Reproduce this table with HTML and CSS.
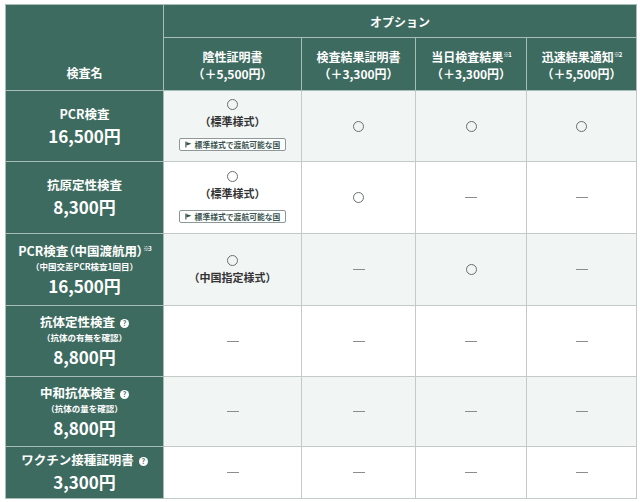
FILE: index.html
```html
<!DOCTYPE html>
<html lang="ja">
<head>
<meta charset="utf-8">
<title>検査料金</title>
<link rel="stylesheet" href="styles.css">
</head>
<body>
<div class="wrap">
<table class="price">
<colgroup>
<col class="c-name"><col class="c-neg"><col class="c-res"><col class="c-day"><col class="c-fast">
</colgroup>
<thead>
<tr class="h1">
<th class="name-h" rowspan="2">検査名</th>
<th colspan="4">オプション</th>
</tr>
<tr class="h2">
<th>陰性証明書<br>（＋5,500円）</th>
<th>検査結果証明書<br>（＋3,300円）</th>
<th>当日検査結果<sup>※1</sup><br>（＋3,300円）</th>
<th>迅速結果通知<sup>※2</sup><br>（＋5,500円）</th>
</tr>
</thead>
<tbody>
<tr class="r-a alt">
<th class="name"><span class="t">PCR検査</span><span class="p">16,500円</span></th>
<td><span class="ok"></span><span class="note">（標準様式）</span><span class="badge"><svg class="flag" viewBox="0 0 8 8" width="7" height="7"><path d="M1 0.5v7" stroke="#2f4f47" stroke-width="1.2"/><path d="M1.6 1l5.8 2-5.8 2z" fill="#2f4f47"/></svg>標準様式で渡航可能な国</span></td>
<td><span class="ok"></span></td>
<td><span class="ok"></span></td>
<td><span class="ok"></span></td>
</tr>
<tr class="r-b">
<th class="name"><span class="t">抗原定性検査</span><span class="p">8,300円</span></th>
<td><span class="ok"></span><span class="note">（標準様式）</span><span class="badge"><svg class="flag" viewBox="0 0 8 8" width="7" height="7"><path d="M1 0.5v7" stroke="#2f4f47" stroke-width="1.2"/><path d="M1.6 1l5.8 2-5.8 2z" fill="#2f4f47"/></svg>標準様式で渡航可能な国</span></td>
<td><span class="ok"></span></td>
<td><span class="no"></span></td>
<td><span class="no"></span></td>
</tr>
<tr class="r-c alt">
<th class="name"><span class="t tight">PCR検査（中国渡航用）<sup>※3</sup></span><span class="s">（中国交差PCR検査1回目）</span><span class="p">16,500円</span></th>
<td><span class="ok"></span><span class="note">（中国指定様式）</span></td>
<td><span class="no"></span></td>
<td><span class="ok"></span></td>
<td><span class="no"></span></td>
</tr>
<tr class="r-d">
<th class="name"><span class="t">抗体定性検査<span class="q">?</span></span><span class="s">（抗体の有無を確認）</span><span class="p">8,800円</span></th>
<td><span class="no"></span></td>
<td><span class="no"></span></td>
<td><span class="no"></span></td>
<td><span class="no"></span></td>
</tr>
<tr class="r-e alt">
<th class="name"><span class="t">中和抗体検査<span class="q">?</span></span><span class="s">（抗体の量を確認）</span><span class="p">8,800円</span></th>
<td><span class="no"></span></td>
<td><span class="no"></span></td>
<td><span class="no"></span></td>
<td><span class="no"></span></td>
</tr>
<tr class="r-f">
<th class="name"><span class="t">ワクチン接種証明書<span class="q">?</span></span><span class="p">3,300円</span></th>
<td><span class="no"></span></td>
<td><span class="no"></span></td>
<td><span class="no"></span></td>
<td><span class="no"></span></td>
</tr>
</tbody>
</table>
</div>
</body>
</html>
```
FILE: styles.css
```css
html, body {
  margin: 0;
  padding: 0;
  background: #ffffff;
}
body {
  font-family: "Noto Sans CJK JP", "Noto Sans", sans-serif;
  color: #333;
}
.wrap {
  padding: 4px 4px 0 5px;
}
.price {
  width: 631px;
  table-layout: fixed;
  border-collapse: collapse;
  border: 1px solid #c3c9c7;
}
.c-name { width: 158px; }
.c-neg { width: 138px; }
.c-res { width: 114px; }
.c-day { width: 111px; }
.c-fast { width: 110px; }

.price th, .price td {
  border: 1px solid #c3cbc8;
  padding: 0;
  text-align: center;
  vertical-align: middle;
}
.price thead th, .price th.name {
  background: #3e6b5f;
  color: #ffffff;
  font-weight: 700;
  border-color: #a8bdb6;
}
.price thead th {
  font-size: 12px;
  line-height: 17px;
}
.h1 { height: 33px; }
.h2 { height: 53px; }
.h2 th { padding-top: 2px; }
.name-h {
  vertical-align: bottom !important;
  padding-bottom: 9px !important;
}
sup {
  font-size: 6px;
  line-height: 0;
  vertical-align: 5px;
  letter-spacing: -1px;
}
.r-a { height: 71px; }
.r-b { height: 72px; }
.r-c { height: 72px; }
.r-d { height: 71px; }
.r-e { height: 70px; }
.r-f { height: 52px; }

.price td { background: #ffffff; }
.price tr.alt td { background: #f1f5f4; }

.name .t, .name .s, .name .p {
  display: block;
}
.name .t {
  font-size: 12.5px;
  line-height: 18px;
}
.name .tight {
  font-feature-settings: "palt";
}
.name .s {
  font-size: 8.5px;
  line-height: 13px;
}
.name .p {
  font-size: 17px;
  line-height: 25px;
}
.q {
  display: inline-block;
  width: 9px;
  height: 9px;
  border-radius: 50%;
  background: #ffffff;
  color: #3e6b5f;
  font-size: 7px;
  line-height: 9px;
  font-weight: 700;
  vertical-align: 1px;
  margin-left: 5px;
  text-align: center;
}
.ok {
  display: block;
  width: 9px;
  height: 9px;
  margin: 0 auto;
  border: 1.5px solid #6a6f6d;
  border-radius: 50%;
}
.no {
  display: block;
  width: 12px;
  height: 0;
  margin: 0 auto;
  border-top: 1.5px solid #8a8f8d;
}
.note {
  display: block;
  font-size: 11px;
  line-height: 16px;
  font-weight: 700;
  color: #333;
  margin-top: 3px;
}
.badge {
  display: inline-flex;
  align-items: center;
  gap: 3px;
  margin-top: 4px;
  padding: 0 5px;
  height: 11px;
  border: 1px solid #8e9896;
  border-radius: 2px;
  background: #ffffff;
  font-size: 7.8px;
  line-height: 11px;
  color: #3b5550;
  font-weight: 700;
  white-space: nowrap;
}
.flag { display: block; }
```
